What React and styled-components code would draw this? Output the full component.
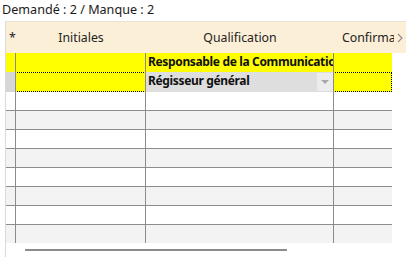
import styled, { createGlobalStyle } from 'styled-components';

const Global = createGlobalStyle`
    body {
        margin: 0;
        background: #ffffff;
        font-family: "Noto Sans", "Open Sans", sans-serif;
        color: #1a1a1a;
    }
`;

// column widths incl. right border: *, Initiales, Qualification, Confirmation
const COLS = [10, 130, 188, 58];

function App() {
    const emptyRows = [0, 1, 2, 3, 4, 5, 6, 7];

    return (
        <Page>
            <Global />
            <Title>Demandé : 2 / Manque : 2</Title>

            <Grid>
                <Header>
                    <HeadCell w={COLS[0]} pad={3}>*</HeadCell>
                    <HeadCell w={COLS[1]}>Initiales</HeadCell>
                    <HeadCell w={COLS[2]}>Qualification</HeadCell>
                    <HeadCell w={COLS[3] + 6} pad={8}>Confirmation</HeadCell>
                    <Chevron>
                        <svg width="6" height="10" viewBox="0 0 6 10">
                            <path d="M1 1 L5 5 L1 9" fill="none" stroke="#8a8a8a" strokeWidth="1.1" />
                        </svg>
                    </Chevron>
                </Header>

                <Row bg="#ffff00" h={19}>
                    <Cell w={COLS[0]} />
                    <Cell w={COLS[1]} />
                    <Cell w={COLS[2]} bold>Responsable de la Communication</Cell>
                    <Cell w={COLS[3]} last />
                </Row>

                <Row bg="#ffff00" h={20} focused>
                    <Cell w={COLS[0]} bg="#d6d6d6" />
                    <Cell w={COLS[1]} />
                    <Cell w={COLS[2]} bold bg="#dedede">
                        Régisseur général
                        <DropButton />
                    </Cell>
                    <Cell w={COLS[3]} last />
                </Row>

                {emptyRows.map((i) => (
                    <Row
                        key={i}
                        bg={i % 2 ? '#f3f3f3' : '#ffffff'}
                        h={i === 7 ? 18 : 19}
                        lined={i !== 7}
                    >
                        <Cell w={COLS[0]} />
                        <Cell w={COLS[1]} />
                        <Cell w={COLS[2]} />
                        <Cell w={COLS[3]} last />
                    </Row>
                ))}

                <ScrollArea>
                    <ScrollThumb />
                </ScrollArea>
            </Grid>
        </Page>
    );
}

const Page = styled.div`
    width: 406px;
    height: 257px;
    overflow: hidden;
`;

const Title = styled.div`
    height: 21px;
    padding-left: 2px;
    font-size: 12.6px;
    line-height: 19px;
    color: #1a1a1a;
    white-space: nowrap;
`;

const Grid = styled.div`
    margin-left: 5px;
    border-left: 1px solid #dadada;
    height: 236px;
`;

const Header = styled.div`
    position: relative;
    display: flex;
    align-items: center;
    height: 31px;
    background: #fcefd8;
    border-top: 1px solid #e8e2d8;
`;

const HeadCell = styled.div`
    width: ${(p) => p.w}px;
    flex: none;
    box-sizing: border-box;
    padding-left: ${(p) => (p.pad ? `${p.pad}px` : '0')};
    text-align: ${(p) => (p.pad ? 'left' : 'center')};
    font-size: 12.3px;
    color: #222222;
    white-space: nowrap;
    overflow: hidden;
    text-overflow: clip;
`;

const Chevron = styled.div`
    position: absolute;
    right: 0;
    top: 0;
    bottom: 0;
    width: 12px;
    display: flex;
    align-items: center;
    justify-content: center;
    background: #fcefd8;
`;

const Row = styled.div`
    position: relative;
    display: flex;
    width: 386px;
    height: ${(p) => p.h}px;
    box-sizing: border-box;
    background: ${(p) => p.bg};
    border-bottom: ${(p) => (p.lined ? '1px solid #8c8c8c' : 'none')};
    outline: ${(p) => (p.focused ? '1px dotted #000000' : 'none')};
    outline-offset: -1px;
`;

const Cell = styled.div`
    position: relative;
    width: ${(p) => p.w}px;
    flex: none;
    box-sizing: border-box;
    background: ${(p) => p.bg || 'transparent'};
    border-right: ${(p) => (p.last ? 'none' : '1px solid #8c8c8c')};
    padding-left: 2px;
    font-size: 12px;
    font-weight: ${(p) => (p.bold ? 700 : 400)};
    letter-spacing: ${(p) => (p.bold ? '-0.35px' : '0')};
    line-height: 18px;
    color: #111111;
    white-space: nowrap;
    overflow: hidden;
`;

const DropButton = styled.div`
    position: absolute;
    right: 0;
    top: 1px;
    bottom: 1px;
    width: 16px;
    background: #ececec;

    &::after {
        content: '';
        position: absolute;
        left: 4px;
        top: 7px;
        border-left: 4px solid transparent;
        border-right: 4px solid transparent;
        border-top: 4px solid #a8a8a8;
    }
`;

const ScrollArea = styled.div`
    padding: 6px 0 0 19px;
`;

const ScrollThumb = styled.div`
    width: 262px;
    height: 2px;
    background: #8c8c8c;
`;

export default App;
